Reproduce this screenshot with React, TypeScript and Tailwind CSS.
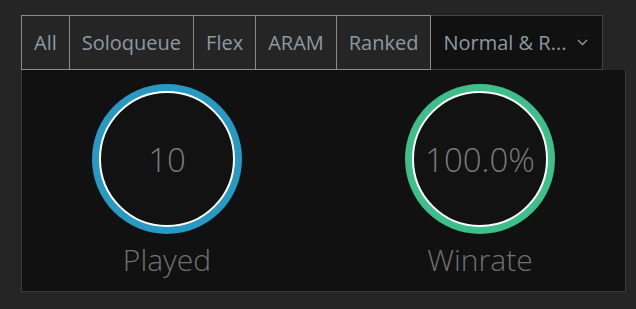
import React from "react";

const tabs = ["All", "Soloqueue", "Flex", "ARAM", "Ranked"];

const StatRing = ({ value, label, ring }: { value: string; label: string; ring: string }) => (
  <div className="flex flex-col items-center">
    <div className={`w-[150px] h-[150px] rounded-full p-[7px] ${ring}`}>
      <div className="w-full h-full rounded-full border-2 border-white bg-[#121212] flex items-center justify-center">
        <span className="text-[33px] font-light text-[#7a7a7a] leading-none">{value}</span>
      </div>
    </div>
    <span className="mt-[6px] text-[30px] font-light text-[#707070] leading-[40px]">{label}</span>
  </div>
);

export default function App() {
  return (
    <div
      className="w-[636px] h-[309px] bg-[#252525] pt-[15px] pl-[21px]"
      style={{ fontFamily: '"Open Sans", sans-serif' }}
    >
      <div className="flex h-[55px]">
        {tabs.map((t, i) => (
          <div
            key={t}
            className={`h-full flex items-center px-[12px] border-y border-r border-[#8a8a8a] text-[20px] text-[#8e99a1] ${
              i === 0 ? "border-l" : ""
            }`}
          >
            {t}
          </div>
        ))}
        <div className="h-full w-[172px] flex items-center justify-between pl-[12px] pr-[14px] bg-[#111] border-y border-r border-[#444] text-[20px] text-[#8e99a1]">
          <span>Normal &amp; R...</span>
          <svg width="11" height="7" viewBox="0 0 11 7" fill="none">
            <path d="M1 1l4.5 4.5L10 1" stroke="#8e99a1" strokeWidth="1.4" />
          </svg>
        </div>
      </div>
      <div className="w-[605px] h-[222px] bg-[#111] border border-t-0 border-[#3a3a3a] flex justify-center gap-[163px] pt-[14px]">
        <StatRing value="10" label="Played" ring="bg-[#2799c2]" />
        <StatRing value="100.0%" label="Winrate" ring="bg-[#3dbe8b]" />
      </div>
    </div>
  );
}
